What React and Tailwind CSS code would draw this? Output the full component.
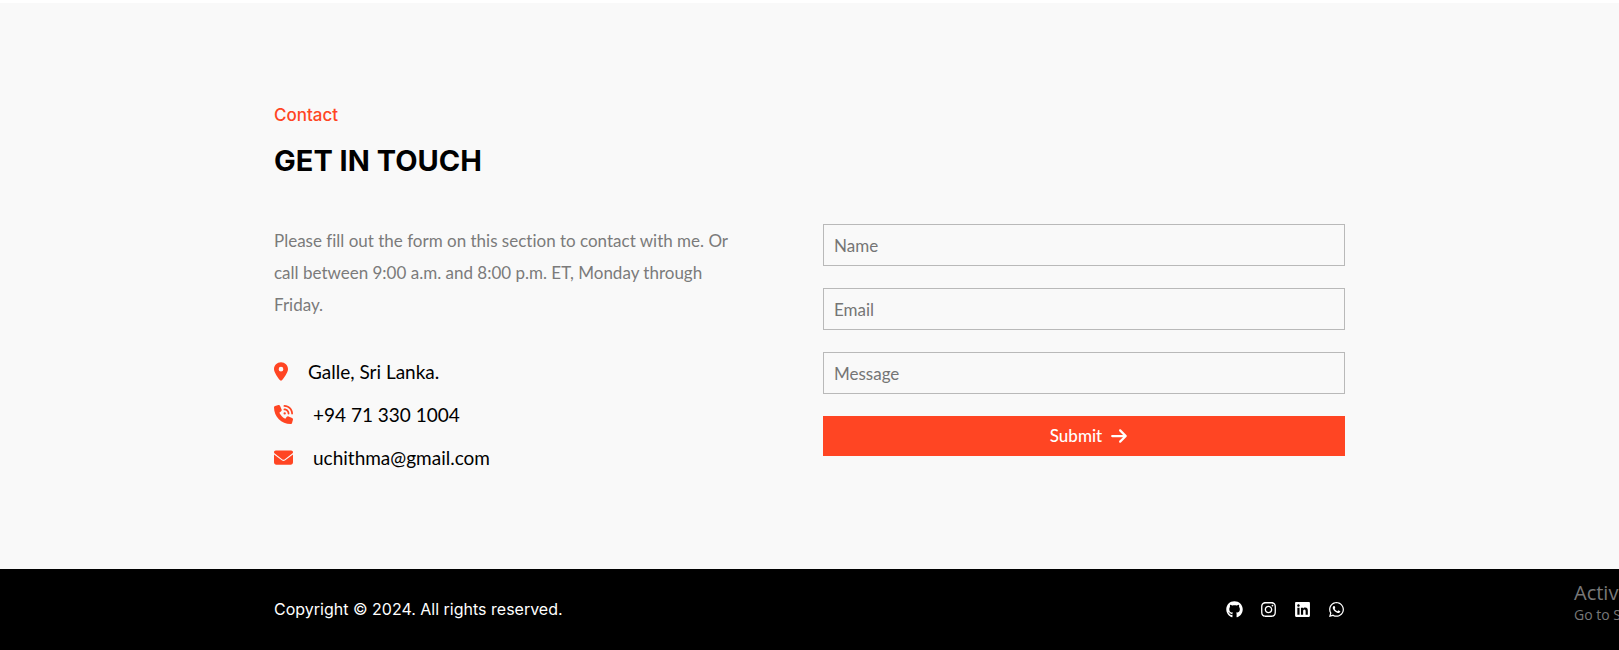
import {
  FaArrowRight,
  FaEnvelope,
  FaGithub,
  FaInstagram,
  FaLinkedin,
  FaLocationDot,
  FaPhoneVolume,
  FaWhatsapp,
} from "react-icons/fa6";

const details = [
  { Icon: FaLocationDot, text: "Galle, Sri Lanka.", box: "w-[14px]" },
  { Icon: FaPhoneVolume, text: "+94 71 330 1004", box: "w-[19px]" },
  { Icon: FaEnvelope, text: "uchithma@gmail.com", box: "w-[19px]" },
];

const fields = [
  { id: "name", label: "Name", type: "text" },
  { id: "email", label: "Email", type: "email" },
  { id: "message", label: "Message", type: "text" },
];

const socials = [
  { label: "GitHub", Icon: FaGithub },
  { label: "Instagram", Icon: FaInstagram },
  { label: "LinkedIn", Icon: FaLinkedin },
  { label: "WhatsApp", Icon: FaWhatsapp },
];

function ContactDetails() {
  return (
    <div>
      <p className="max-w-[460px] pt-px text-[17px] leading-8 text-[#7b7b7b] [font-variant-ligatures:none]">
        Please fill out the form on this section to contact with me. Or call
        between 9:00 a.m. and 8:00 p.m. ET, Monday through Friday.
      </p>
      <ul className="mt-[37px] flex flex-col gap-4">
        {details.map(({ Icon, text, box }) => (
          <li key={text} className="flex items-center gap-5 text-[19px] leading-[27px] text-black">
            <Icon className={`${box} h-[19px] shrink-0 text-[#ff4523]`} aria-hidden="true" />
            <span>{text}</span>
          </li>
        ))}
      </ul>
    </div>
  );
}

function ContactForm() {
  return (
    <form className="flex flex-col gap-[22px]" onSubmit={(e) => e.preventDefault()}>
      {fields.map(({ id, label, type }) => (
        <input
          key={id}
          id={id}
          type={type}
          aria-label={label}
          placeholder={label}
          className="h-[42px] w-full border border-[#b9b9b9] bg-transparent px-[10px] text-[17px] text-black outline-none placeholder:text-[#757575]"
        />
      ))}
      <button
        type="submit"
        className="flex h-10 w-full items-center justify-center gap-2 bg-[#ff4523] pl-[10px] text-[17px] font-medium text-white"
      >
        Submit
        <FaArrowRight className="size-[18px]" aria-hidden="true" />
      </button>
    </form>
  );
}

export default function App() {
  return (
    <div className="flex min-h-screen flex-col overflow-x-hidden bg-white pt-[3px] font-['Lato','Open_Sans',sans-serif]">
      <main className="grow bg-[#f9f9f9] px-6 pt-[100px] pb-20">
        <section className="mx-auto max-w-[1071px]">
          <header className="font-['Inter','Open_Sans',sans-serif]">
            <p className="text-[17px] leading-6 font-medium text-[#ff4523]">Contact</p>
            <h1 className="mt-[10px] text-[29px] leading-[48px] font-bold text-black">GET IN TOUCH</h1>
          </header>
          <div className="mt-[39px] grid gap-[27px] md:grid-cols-2">
            <ContactDetails />
            <ContactForm />
          </div>
        </section>
      </main>

      <footer className="relative bg-black px-6 py-7">
        <div className="mx-auto flex max-w-[1071px] items-center justify-between text-white">
          <p className="font-['Inter','Open_Sans',sans-serif] text-base leading-[25px]">
            Copyright © 2024. All rights reserved.
          </p>
          <nav className="flex items-center gap-[17px]" aria-label="Social links">
            {socials.map(({ label, Icon }) => (
              <a key={label} href="#" aria-label={label}>
                <Icon className="size-[17px]" aria-hidden="true" />
              </a>
            ))}
          </nav>
        </div>
        <div className="absolute top-3 left-[calc(100%-45px)] font-['Open_Sans',sans-serif] whitespace-nowrap text-[#787878]">
          <p className="text-xl leading-6">Activate Windows</p>
          <p className="text-sm leading-5">Go to Settings to activate Windows.</p>
        </div>
      </footer>
    </div>
  );
}
